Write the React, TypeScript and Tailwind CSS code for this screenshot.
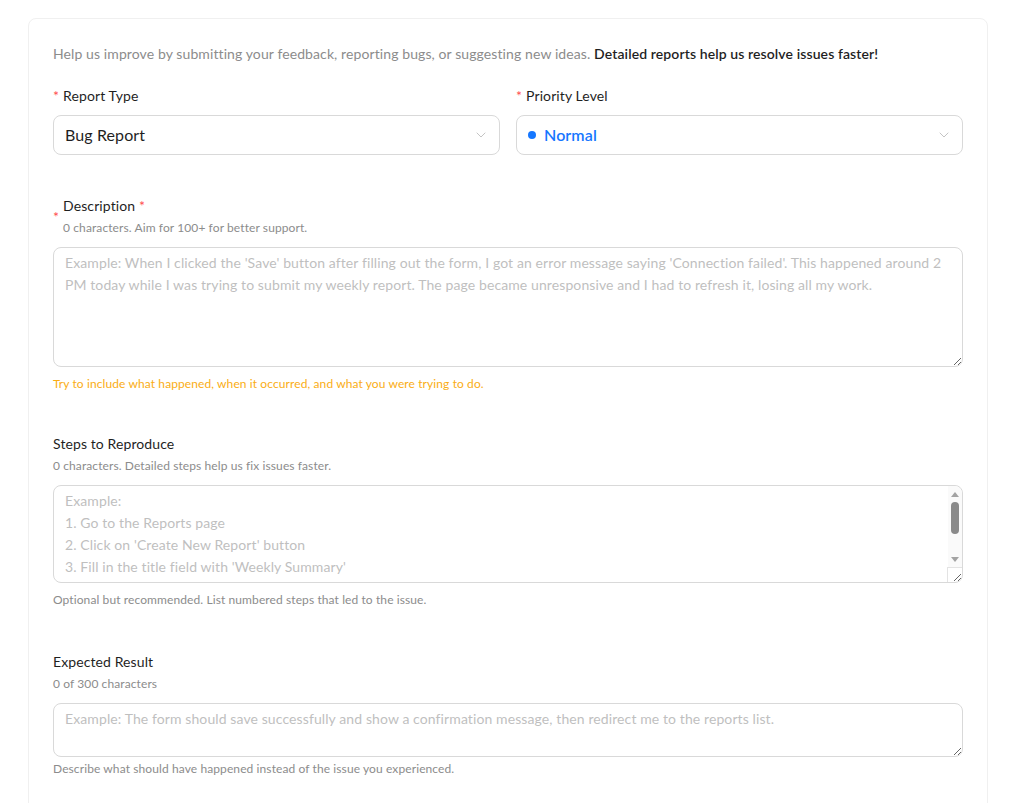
import { ChevronDown } from "lucide-react";

const font = { fontFamily: "Lato, 'Noto Sans', sans-serif" };

function Star() {
  return <span className="mr-1 text-[14px] leading-none text-[#ff4d4f]">*</span>;
}

function SelectBox({ children }: { children: React.ReactNode }) {
  return (
    <div className="flex h-10 items-center justify-between rounded-lg border border-[#d9d9d9] bg-white pl-[11px] pr-[10px]">
      <div className="flex items-center text-[16px]">{children}</div>
      <ChevronDown className="h-4 w-4 text-[#c4c4c4]" strokeWidth={1.5} />
    </div>
  );
}

// fake scrollbar sitting over the steps textarea
function ScrollBar() {
  return (
    <>
      <div className="pointer-events-none absolute right-[1px] top-[1px] bottom-[16px] flex w-[14px] flex-col items-center rounded-tr-lg bg-[#fafafa] pt-[6px] pb-[5px]">
        <span className="h-0 w-0 border-x-[4px] border-b-[5px] border-x-transparent border-b-[#a3a3a3]" />
        <span className="mt-[5px] h-[32px] w-[8px] rounded-full bg-[#8a8a8a]" />
        <span className="mt-auto h-0 w-0 border-x-[4px] border-t-[5px] border-x-transparent border-t-[#a3a3a3]" />
      </div>
      <div className="pointer-events-none absolute bottom-[1px] right-[1px] h-[15px] w-[15px] border-l border-t border-[#e3e3e3]" />
    </>
  );
}

export default function App() {
  return (
    <div className="min-h-screen bg-white px-[28px] pt-[18px] tracking-[0.1px]" style={font}>
      <div className="w-[960px] rounded-lg border border-[#f0f0f0] bg-white p-6 pb-10">
        <p className="text-[14px] leading-[22px] text-[#8c8c8c]">
          Help us improve by submitting your feedback, reporting bugs, or suggesting new ideas.{" "}
          <span className="font-semibold text-[#1f1f1f]">Detailed reports help us resolve issues faster!</span>
        </p>

        <div className="mt-[20px] grid grid-cols-2 gap-4">
          <div>
            <label className="flex items-center pb-2 text-[14px] leading-[22px] text-[#1f1f1f]">
              <Star />
              Report Type
            </label>
            <SelectBox>
              <span className="text-[#1f1f1f]">Bug Report</span>
            </SelectBox>
          </div>
          <div>
            <label className="flex items-center pb-2 text-[14px] leading-[22px] text-[#1f1f1f]">
              <Star />
              Priority Level
            </label>
            <SelectBox>
              <span className="mr-2 h-2 w-2 rounded-full bg-[#1677ff]" />
              <span className="font-semibold text-[#1677ff]">Normal</span>
            </SelectBox>
          </div>
        </div>

        <div className="mt-[40px]">
          <div className="flex items-center pb-2">
            <Star />
            <div>
              <div className="text-[14px] leading-[22px] text-[#1f1f1f]">
                Description <span className="text-[#ff4d4f]">*</span>
              </div>
              <div className="text-[12px] leading-[22px] text-[#8c8c8c]">
                0 characters. Aim for 100+ for better support.
              </div>
            </div>
          </div>
          <textarea
            rows={5}
            className="block h-[120px] w-full resize-y rounded-lg border border-[#d9d9d9] px-[11px] py-1 text-[14px] leading-[22px] text-[#1f1f1f] outline-none placeholder:text-[#bfbfbf]"
            placeholder="Example: When I clicked the 'Save' button after filling out the form, I got an error message saying 'Connection failed'. This happened around 2 PM today while I was trying to submit my weekly report. The page became unresponsive and I had to refresh it, losing all my work."
          />
          <div className="pt-[7px] text-[12px] leading-[20px] text-[#faad14]">
            Try to include what happened, when it occurred, and what you were trying to do.
          </div>
        </div>

        <div className="mt-[39px]">
          <div className="text-[14px] leading-[22px] text-[#1f1f1f]">Steps to Reproduce</div>
          <div className="pb-2 text-[12px] leading-[22px] text-[#8c8c8c]">
            0 characters. Detailed steps help us fix issues faster.
          </div>
          <div className="relative">
            <textarea
              rows={4}
              className="block h-[98px] w-full resize-y rounded-lg border border-[#d9d9d9] py-1 pl-[11px] pr-[20px] text-[14px] leading-[22px] text-[#1f1f1f] outline-none placeholder:text-[#bfbfbf]"
              placeholder={
                "Example:\n1. Go to the Reports page\n2. Click on 'Create New Report' button\n3. Fill in the title field with 'Weekly Summary'\n4. Click 'Save'\n5. See error"
              }
            />
            <ScrollBar />
          </div>
          <div className="pt-[7px] text-[12px] leading-[20px] text-[#8c8c8c]">
            Optional but recommended. List numbered steps that led to the issue.
          </div>
        </div>

        <div className="mt-[41px]">
          <div className="text-[14px] leading-[22px] text-[#1f1f1f]">Expected Result</div>
          <div className="pb-2 text-[12px] leading-[22px] text-[#8c8c8c]">0 of 300 characters</div>
          <textarea
            rows={2}
            className="block h-[54px] w-full resize-y rounded-lg border border-[#d9d9d9] px-[11px] py-1 text-[14px] leading-[22px] text-[#1f1f1f] outline-none placeholder:text-[#bfbfbf]"
            placeholder="Example: The form should save successfully and show a confirmation message, then redirect me to the reports list."
          />
          <div className="pt-[2px] text-[12px] leading-[20px] text-[#8c8c8c]">
            Describe what should have happened instead of the issue you experienced.
          </div>
        </div>
      </div>
    </div>
  );
}
